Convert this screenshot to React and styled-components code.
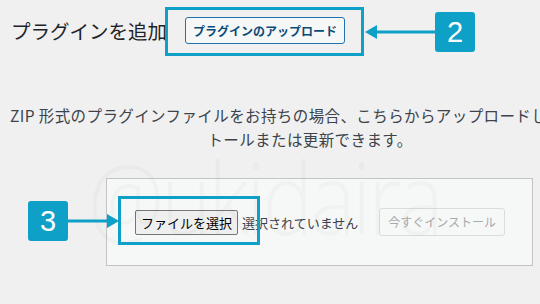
import React from 'react'
import styled, { createGlobalStyle } from 'styled-components'

const GlobalStyle = createGlobalStyle`
    html, body {
        margin: 0;
        padding: 0;
        background: #f0f0f1;
    }
    body {
        font-family: "Noto Sans CJK JP", "Noto Sans", sans-serif;
        color: #3c434a;
    }
`

function Arrow({ width }) {
    return (
        <svg width={width} height="16" viewBox={`0 0 ${width} 16`}>
            <rect x="10" y="6.5" width={width - 10} height="3" fill="#0fa0c8" />
            <polygon points="0,8 12,1 12,15" fill="#0fa0c8" />
        </svg>
    )
}

function App() {
    return (
        <Page>
            <GlobalStyle />
            <Header>
                <Title>プラグインを追加</Title>
                <UploadToggle>プラグインのアップロード</UploadToggle>
            </Header>

            <Description>
                ZIP 形式のプラグインファイルをお持ちの場合、こちらからアップロードしてインス<br />
                トールまたは更新できます。
            </Description>

            <UploadForm>
                <FileButton>ファイルを選択</FileButton>
                <FileStatus>選択されていません</FileStatus>
                <InstallButton disabled>今すぐインストール</InstallButton>
            </UploadForm>

            <Watermark>@ukidaira</Watermark>

            <Frame $left={165} $top={7} $width={199} $height={49} />
            <ArrowWrap $left={365} $top={24}><Arrow width={71} /></ArrowWrap>
            <Badge $left={435} $top={12}>2</Badge>

            <Frame $left={118} $top={196} $width={142} $height={49} />
            <Badge $left={28} $top={201}>3</Badge>
            <ArrowWrap $left={67} $top={213} $flip><Arrow width={52} /></ArrowWrap>
        </Page>
    )
}

export default App

const Page = styled.div`
    position: relative;
    width: 540px;
    height: 304px;
    overflow: hidden;
`

const Header = styled.div`
    display: flex;
    align-items: center;
    padding: 17px 0 0 11px;
    height: 27px;
`

const Title = styled.h1`
    margin: 0;
    font-size: 19.5px;
    font-weight: 400;
    line-height: 27px;
    color: #1d2327;
    white-space: nowrap;
`

const UploadToggle = styled.button`
    flex-shrink: 0;
    margin-left: 18px;
    height: 27px;
    padding: 0 7px;
    border: 1px solid #2271b1;
    border-radius: 3px;
    background: #f6f7f7;
    color: #0a4b78;
    font-family: "Noto Sans CJK JP", sans-serif;
    font-size: 12px;
    font-weight: 700;
    line-height: 25px;
    white-space: nowrap;
`

const Description = styled.p`
    width: 600px;
    margin: 59px 0 0 10px;
    font-size: 15.5px;
    letter-spacing: 0.4px;
    line-height: 24px;
    text-align: center;
    white-space: nowrap;
    color: #3c434a;
`

const UploadForm = styled.div`
    box-sizing: border-box;
    display: flex;
    align-items: center;
    width: 427px;
    height: 88px;
    margin: 27px 0 0 106px;
    padding: 0 28px;
    border: 1px solid #c3c4c7;
    background: #f6f7f7;
    white-space: nowrap;
`

const FileButton = styled.button`
    flex-shrink: 0;
    height: 25px;
    padding: 0 5px;
    border: 1px solid #767676;
    border-radius: 2px;
    background: #efefef;
    color: #000;
    font-family: "Noto Sans CJK JP", sans-serif;
    font-size: 13px;
    line-height: 23px;
`

const FileStatus = styled.span`
    flex-shrink: 0;
    margin-left: 4px;
    font-size: 13px;
    color: #3c434a;
`

const InstallButton = styled.button`
    flex-shrink: 0;
    margin-left: 21px;
    height: 28px;
    padding: 0 8px;
    border: 1px solid #dcdcde;
    border-radius: 3px;
    background: #f6f7f7;
    color: #a7aaad;
    font-family: "Noto Sans CJK JP", sans-serif;
    font-size: 12px;
    line-height: 26px;
`

const Watermark = styled.div`
    position: absolute;
    left: 88px;
    top: 146px;
    font-family: "Open Sans", sans-serif;
    font-weight: 300;
    font-size: 100px;
    line-height: 1;
    letter-spacing: -4px;
    transform: scaleX(0.86);
    transform-origin: left top;
    color: rgba(0, 0, 0, 0.022);
    pointer-events: none;
`

const Frame = styled.div`
    position: absolute;
    box-sizing: border-box;
    left: ${p => p.$left}px;
    top: ${p => p.$top}px;
    width: ${p => p.$width}px;
    height: ${p => p.$height}px;
    border: 3px solid #0fa0c8;
`

const ArrowWrap = styled.div`
    position: absolute;
    left: ${p => p.$left}px;
    top: ${p => p.$top}px;
    line-height: 0;
    transform: ${p => (p.$flip ? 'scaleX(-1)' : 'none')};
`

const Badge = styled.div`
    position: absolute;
    left: ${p => p.$left}px;
    top: ${p => p.$top}px;
    width: 40px;
    height: 40px;
    border-radius: 3px;
    background: #0fa0c8;
    color: #fff;
    font-family: "Liberation Sans", Arial, sans-serif;
    font-size: 29px;
    line-height: 40px;
    text-align: center;
`
